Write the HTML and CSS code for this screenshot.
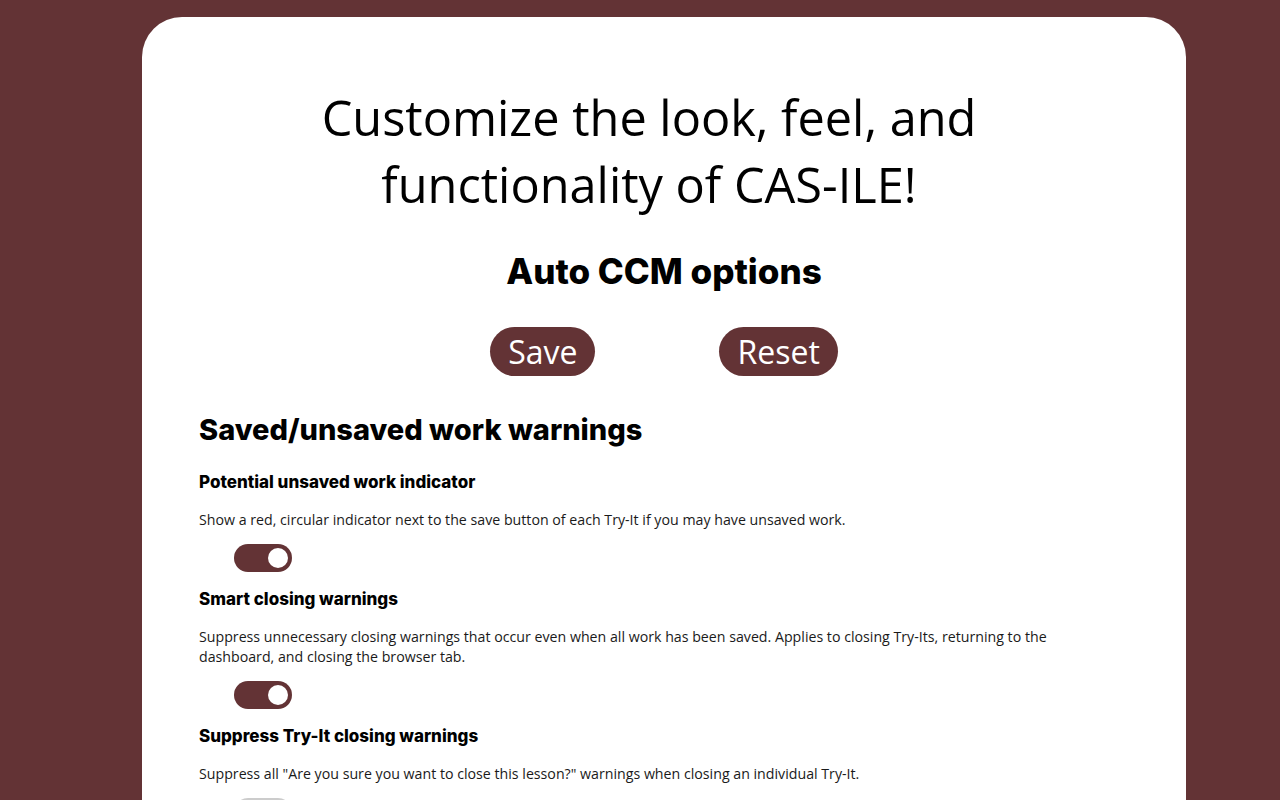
FILE: index.html
```html
<!DOCTYPE html>
<html lang="en">
<head>
<meta charset="utf-8">
<title>CAS-ILE options</title>
<link rel="stylesheet" href="styles.css">
</head>
<body>
<main class="card">
  <h1 class="title">Customize the look, feel, and functionality of CAS-ILE!</h1>
  <h2 class="subtitle">Auto CCM options</h2>
  <div class="actions">
    <button class="btn">Save</button>
    <button class="btn">Reset</button>
  </div>
  <section class="section">
    <h3 class="section-title">Saved/unsaved work warnings</h3>
    <div class="option">
      <h4 class="option-title">Potential unsaved work indicator</h4>
      <p class="option-desc">Show a red, circular indicator next to the save button of each Try-It if you may have unsaved work.</p>
      <span class="toggle on"><span class="knob"></span></span>
    </div>
    <div class="option">
      <h4 class="option-title">Smart closing warnings</h4>
      <p class="option-desc">Suppress unnecessary closing warnings that occur even when all work has been saved. Applies to closing Try-Its, returning to the dashboard, and closing the browser tab.</p>
      <span class="toggle on"><span class="knob"></span></span>
    </div>
    <div class="option">
      <h4 class="option-title">Suppress Try-It closing warnings</h4>
      <p class="option-desc">Suppress all "Are you sure you want to close this lesson?" warnings when closing an individual Try-It.</p>
      <span class="toggle off"><span class="knob"></span></span>
    </div>
  </section>
</main>
</body>
</html>
```

FILE: styles.css
```css
html, body {
  margin: 0;
  padding: 0;
  background: #633335;
}
body {
  height: 800px;
  overflow: hidden;
  font-family: "Open Sans", "Noto Sans", sans-serif;
}
.card {
  margin: 17px 94px 0 142px;
  background: #fff;
  border-radius: 40px;
  padding: 67px 57px 40px 57px;
  min-height: 900px;
  box-sizing: border-box;
}
.title {
  margin: 0 auto;
  width: 700px;
  text-align: center;
  font-family: "Open Sans", sans-serif;
  font-weight: 400;
  font-size: 48.7px;
  line-height: 67px;
  color: #000;
  padding-right: 30px;
}
.subtitle {
  margin: 33px 0 0;
  text-align: center;
  font-family: "Inter", sans-serif;
  font-weight: 800;
  font-size: 35px;
  line-height: 40px;
  color: #000;
}
.actions {
  display: flex;
  justify-content: center;
  gap: 124px;
  margin-top: 36px;
}
.btn {
  background: #633335;
  color: #fff;
  border: none;
  border-radius: 25px;
  height: 49px;
  padding: 0 18px;
  font-family: "Open Sans", sans-serif;
  font-size: 32px;
  line-height: 49px;
  cursor: pointer;
}
.section {
  margin-top: 36px;
}
.section-title {
  margin: 0;
  font-family: "Inter", sans-serif;
  font-weight: 800;
  font-size: 29px;
  line-height: 36px;
  color: #000;
}
.option {
  display: flex;
  flex-direction: column;
  align-items: flex-start;
}
.option-title {
  margin: 0;
  font-family: "Inter", sans-serif;
  font-weight: 800;
  font-size: 17px;
  line-height: 22px;
  color: #000;
}
.section-title + .option .option-title {
  margin-top: 23px;
}
.option + .option .option-title {
  margin-top: 16px;
}
.option-desc {
  margin: 17px 0 0;
  max-width: 860px;
  font-family: "Open Sans", sans-serif;
  font-size: 14.2px;
  line-height: 20px;
  color: #1a1a1a;
}
.toggle {
  margin: 14px 0 0 35px;
  width: 58px;
  height: 28px;
  border-radius: 14px;
  display: flex;
  align-items: center;
  padding: 0 4px;
  box-sizing: border-box;
}
.toggle.on {
  background: #633335;
  justify-content: flex-end;
}
.toggle.off {
  background: #ccc;
  justify-content: flex-start;
}
.knob {
  width: 20px;
  height: 20px;
  border-radius: 50%;
  background: #fff;
}
```
